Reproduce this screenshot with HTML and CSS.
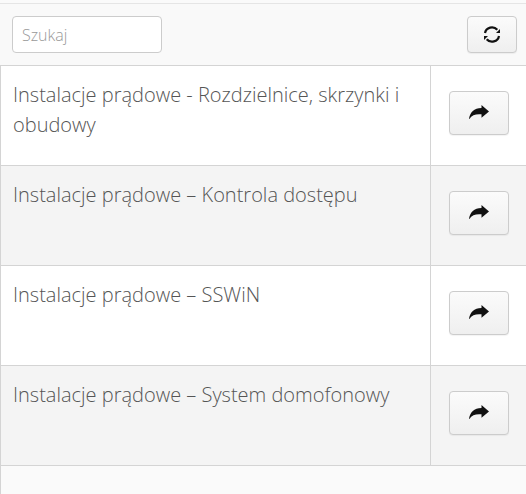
FILE: index.html
```html
<!DOCTYPE html>
<html lang="pl">
<head>
<meta charset="UTF-8">
<meta name="viewport" content="width=device-width, initial-scale=1.0">
<title>Instalacje prądowe</title>
<link rel="stylesheet" href="styles.css">
</head>
<body>
    <div class="toolbar">
        <input class="search" type="text" placeholder="Szukaj">
        <button class="btn refresh-btn" type="button" aria-label="Odśwież">
            <svg width="18" height="17" viewBox="0 0 18 17">
                <path d="M2 7A7 6.800 0 0 1 14.300 3.800" class="spin-line"/>
                <path d="M16 10A7 6.800 0 0 1 3.700 13.200" class="spin-line"/>
                <path d="M17 3V7H13Z"/>
                <path d="M1 14V10H5Z"/>
            </svg>
        </button>
    </div>
    <div class="list">
        <div class="row">
            <div class="row-title">Instalacje prądowe - Rozdzielnice, skrzynki i obudowy</div>
            <div class="row-action">
                <button class="btn go-btn" type="button" aria-label="Przejdź">
                    <svg width="20" height="16" viewBox="0 0 20 16"><path d="M0 13.800C1 7.500 5 3 12.500 3V0L20 6.500L12.500 12.800V9.300C7 8.800 3 9.800 .4 14Z"/></svg>
                </button>
            </div>
        </div>
        <div class="row">
            <div class="row-title">Instalacje prądowe – Kontrola dostępu</div>
            <div class="row-action">
                <button class="btn go-btn" type="button" aria-label="Przejdź">
                    <svg width="20" height="16" viewBox="0 0 20 16"><path d="M0 13.800C1 7.500 5 3 12.500 3V0L20 6.500L12.500 12.800V9.300C7 8.800 3 9.800 .4 14Z"/></svg>
                </button>
            </div>
        </div>
        <div class="row">
            <div class="row-title">Instalacje prądowe – SSWiN</div>
            <div class="row-action">
                <button class="btn go-btn" type="button" aria-label="Przejdź">
                    <svg width="20" height="16" viewBox="0 0 20 16"><path d="M0 13.800C1 7.500 5 3 12.500 3V0L20 6.500L12.500 12.800V9.300C7 8.800 3 9.800 .4 14Z"/></svg>
                </button>
            </div>
        </div>
        <div class="row">
            <div class="row-title">Instalacje prądowe – System domofonowy</div>
            <div class="row-action">
                <button class="btn go-btn" type="button" aria-label="Przejdź">
                    <svg width="20" height="16" viewBox="0 0 20 16"><path d="M0 13.800C1 7.500 5 3 12.500 3V0L20 6.500L12.500 12.800V9.300C7 8.800 3 9.800 .4 14Z"/></svg>
                </button>
            </div>
        </div>
    </div>
</body>
</html>
```

FILE: styles.css
```css
html, body {
    height: 100%;
}
body {
    margin: 0;
    padding-top: 3px;
    box-sizing: border-box;
    font-family: "Open Sans", sans-serif;
    color: #555;
    background-color: #fafafa;
    overflow: hidden;
}
.toolbar {
    display: flex;
    justify-content: space-between;
    align-items: flex-start;
    height: 63px;
    box-sizing: border-box;
    padding: 12px 9px 0 12px;
    background-color: #f9f9f9;
    border-top: 1px solid #e5e5e5;
    border-bottom: 1px solid #d4d4d4;
}
.search {
    width: 150px;
    height: 37px;
    box-sizing: border-box;
    padding: 0 9px;
    font-family: inherit;
    font-size: 16px;
    font-weight: 300;
    color: #555;
    background-color: #fff;
    border: 1px solid #ccc;
    border-radius: 4px;
}
.search::placeholder {
    color: #999;
}
.btn {
    display: flex;
    align-items: center;
    justify-content: center;
    padding: 0;
    background-color: #f5f5f5;
    background-image: linear-gradient(#fbfbfb, #efefef);
    border: 1px solid #ccc;
    border-radius: 4px;
    box-shadow: 0 1px 1px rgba(0, 0, 0, 0.05);
    cursor: pointer;
}
.refresh-btn {
    width: 50px;
    height: 37px;
}
.go-btn {
    width: 60px;
    height: 44px;
}
svg path {
    fill: #111;
}
svg path.spin-line {
    fill: none;
    stroke: #111;
    stroke-width: 2.200;
}
.list {
    min-height: 428px;
    border-left: 1px solid #d4d4d4;
}
.row {
    display: grid;
    grid-template-columns: 430px 1fr;
    height: 100px;
    box-sizing: border-box;
    background-color: #fff;
    border-bottom: 1px solid #d4d4d4;
}
.row:nth-child(even) {
    background-color: #f4f4f4;
}
.row-title {
    padding: 14px 12px 0 12px;
    font-size: 20px;
    font-weight: 300;
    line-height: 30px;
    border-right: 1px solid #d4d4d4;
}
.row-action {
    display: flex;
    justify-content: flex-start;
    align-items: flex-start;
    padding: 25px 0 0 18px;
}
```
